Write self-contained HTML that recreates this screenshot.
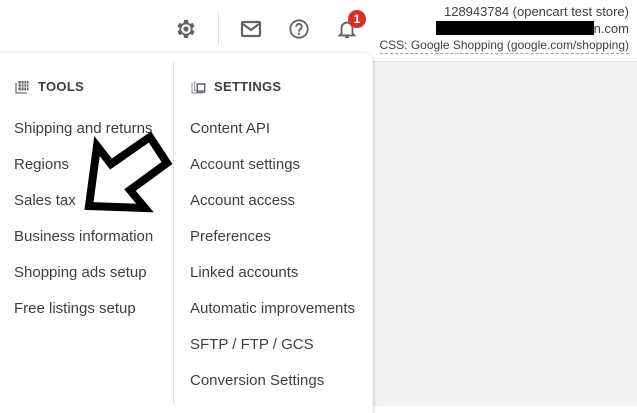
<!DOCTYPE html>
<html><head><style>
body{margin:0;width:637px;height:405px;overflow:hidden;background:#fff;font-family:"Liberation Sans",Arial,sans-serif;position:relative}
.bg{position:absolute;left:0;top:61px;width:637px;height:344px;background:#f2f2f2;border-top:1px solid #e0e0e0}
.panel{position:absolute;left:0;top:53px;width:373px;height:360px;background:#fff;border-radius:0 10px 0 0;box-shadow:0 1px 4px rgba(0,0,0,.25)}
.div{position:absolute;left:173px;top:62px;width:1px;height:343px;background:#e0e0e0}
.h{position:absolute;font-size:13px;font-weight:bold;color:#3c4043;letter-spacing:.3px}
.i{position:absolute;font-size:15px;color:#3c4043}
.tr{position:absolute;right:8px;font-size:13px;color:#3c4043;text-align:right}
</style></head><body>
<div class="bg"></div>
<div class="panel"></div>
<div class="div"></div>
<svg style="position:absolute;left:174px;top:17px" width="24" height="24" viewBox="0 0 24 24"><path fill="#5f6368" d="M19.4 13a7.5 7.5 0 0 0 0-2l2.1-1.6-2-3.5-2.5 1a7 7 0 0 0-1.7-1L14.9 3h-4l-.4 2.9a7 7 0 0 0-1.7 1l-2.5-1-2 3.5L6.4 11a7.5 7.5 0 0 0 0 2l-2.1 1.6 2 3.5 2.5-1a7 7 0 0 0 1.7 1l.4 2.9h4l.4-2.9a7 7 0 0 0 1.7-1l2.5 1 2-3.5z" transform="translate(-.9 0)"/><circle cx="12" cy="12" r="4.8" fill="#fff"/><circle cx="12" cy="12" r="2.6" fill="#5f6368"/></svg>
<div style="position:absolute;left:218px;top:13px;width:1px;height:32px;background:#dadce0"></div>
<svg style="position:absolute;left:240px;top:19px" width="22" height="20" viewBox="0 0 22 20"><rect x="2" y="3" width="18" height="14" rx="1" fill="none" stroke="#5f6368" stroke-width="2.2"/><path d="M3 5l8 6 8-6" fill="none" stroke="#5f6368" stroke-width="2.2"/></svg>
<svg style="position:absolute;left:288px;top:18px" width="22" height="22" viewBox="0 0 24 24"><circle cx="12" cy="12" r="9.5" fill="none" stroke="#5f6368" stroke-width="2"/><path d="M9 9.5a3 3 0 1 1 4.2 2.7c-.8.4-1.2 1-1.2 2v.5" fill="none" stroke="#5f6368" stroke-width="2"/><circle cx="12" cy="17.3" r="1.2" fill="#5f6368"/></svg>
<svg style="position:absolute;left:336px;top:18px" width="22" height="22" viewBox="0 0 24 24"><path d="M6 17V11a6 6 0 0 1 12 0v6l2 2H4z" fill="none" stroke="#5f6368" stroke-width="2"/><path d="M10 21h4" stroke="#5f6368" stroke-width="2"/></svg>
<div style="position:absolute;left:348px;top:10px;width:18px;height:18px;border-radius:50%;background:#d93025;color:#fff;font-size:12px;font-weight:bold;text-align:center;line-height:18px">1</div>
<div class="tr" style="top:4px">128943784 (opencart test store)</div>
<div class="tr" style="top:21px"><span style="display:inline-block;width:158px;height:14px;background:#000;vertical-align:-2px"></span>n.com</div>
<div class="tr" style="top:38px;font-size:12px;border-bottom:1px dashed #9aa0a6;padding-bottom:1px">CSS: Google Shopping (google.com/shopping)</div>
<svg style="position:absolute;left:15px;top:80px" width="15" height="14" viewBox="0 0 15 14"><path d="M1 3v10h11" fill="none" stroke="#80868b" stroke-width="1.5"/><rect x="3.5" y="1" width="10" height="9.5" fill="#5f6368"/><path d="M6.2 1v9.5M9 1v9.5M11.5 1v9.5M3.5 4h10M3.5 7h10" stroke="#fff" stroke-width=".8"/></svg>
<div class="h" style="left:38px;top:79px">TOOLS</div>
<svg style="position:absolute;left:191px;top:80px" width="15" height="14" viewBox="0 0 15 14"><path d="M1 3v10h11" fill="none" stroke="#9aa0a6" stroke-width="1.2"/><path d="M3.5 1v9.5h10" fill="none" stroke="#9aa0a6" stroke-width="1.2"/><rect x="6.2" y="4" width="7.5" height="8" fill="none" stroke="#5f6368" stroke-width="1.5"/></svg>
<div class="h" style="left:214px;top:79px">SETTINGS</div>
<div class="i" style="left:14px;top:120px">Shipping and returns</div>
<div class="i" style="left:14px;top:156px">Regions</div>
<div class="i" style="left:14px;top:192px">Sales tax</div>
<div class="i" style="left:14px;top:228px">Business information</div>
<div class="i" style="left:14px;top:264px">Shopping ads setup</div>
<div class="i" style="left:14px;top:300px">Free listings setup</div>
<div class="i" style="left:190px;top:120px">Content API</div>
<div class="i" style="left:190px;top:156px">Account settings</div>
<div class="i" style="left:190px;top:192px">Account access</div>
<div class="i" style="left:190px;top:228px">Preferences</div>
<div class="i" style="left:190px;top:264px">Linked accounts</div>
<div class="i" style="left:190px;top:300px">Automatic improvements</div>
<div class="i" style="left:190px;top:336px">SFTP / FTP / GCS</div>
<div class="i" style="left:190px;top:372px">Conversion Settings</div>
<svg style="position:absolute;left:0;top:0" width="637" height="405"><polygon points="89,206 97,146 111,164 150,137 167,163 130,190 145,208" fill="none" stroke="#000" stroke-width="8" stroke-linejoin="miter"/></svg>
</body></html>
